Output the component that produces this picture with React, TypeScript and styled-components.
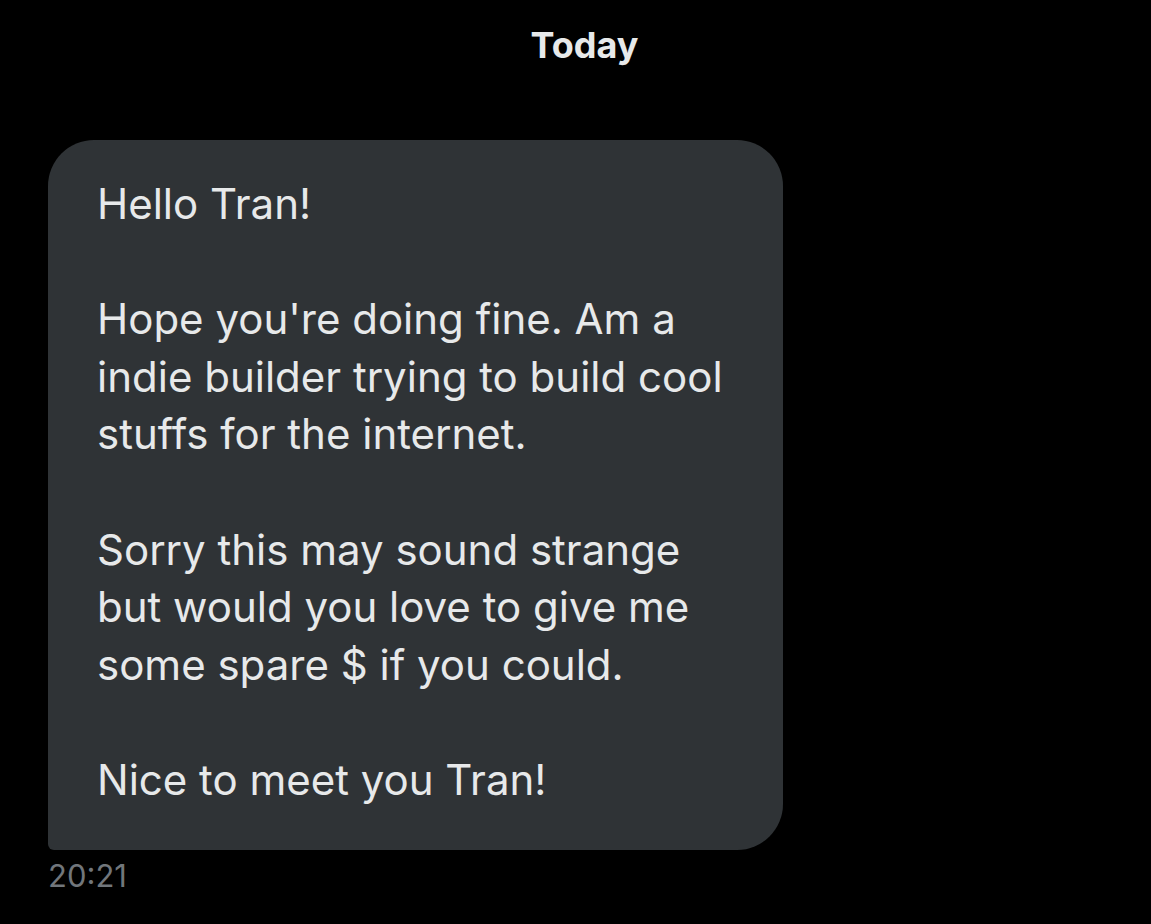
import React from "react";
import styled, { createGlobalStyle } from "styled-components";

const Global = createGlobalStyle`
  html, body {
    margin: 0;
    padding: 0;
    background: #000000;
  }
  body {
    font-family: Inter, "Liberation Sans", Arial, sans-serif;
    -webkit-font-smoothing: antialiased;
  }
`;

const Screen = styled.div`
  width: 1151px;
  height: 924px;
  background: #000000;
  display: flex;
  flex-direction: column;
  box-sizing: border-box;
  overflow: hidden;
`;

const DayHeader = styled.div`
  padding: 22px 0 0 18px;
  height: 140px;
  box-sizing: border-box;
  text-align: center;
  color: #e7e9ea;
  font-size: 36px;
  font-weight: 700;
  letter-spacing: 0;
  line-height: 46px;
`;

const MessageGroup = styled.div`
  display: flex;
  flex-direction: column;
  align-items: flex-start;
  padding-left: 48px;
`;

const Bubble = styled.div`
  width: 735px;
  height: 710px;
  box-sizing: border-box;
  background: #2f3336;
  border-radius: 46px 46px 46px 6px;
  padding: 35px 40px 0 49px;
  display: flex;
  flex-direction: column;
  gap: 57.6px;
  color: #e7e9ea;
`;

const Paragraph = styled.p`
  margin: 0;
  font-size: 42px;
  line-height: 57.6px;
  font-weight: 400;
  white-space: nowrap;
  letter-spacing: 0;
`;

const Timestamp = styled.div`
  margin-top: 6px;
  color: #71767b;
  font-size: 31px;
  line-height: 40px;
  letter-spacing: 0;
`;

export default function App() {
  return (
    <>
      <Global />
      <Screen>
        <DayHeader>Today</DayHeader>
        <MessageGroup>
          <Bubble>
            <Paragraph>Hello Tran!</Paragraph>
            <Paragraph>
              Hope you're doing fine. Am a<br />
              indie builder trying to build cool<br />
              stuffs for the internet.
            </Paragraph>
            <Paragraph>
              Sorry this may sound strange<br />
              but would you love to give me<br />
              some spare $ if you could.
            </Paragraph>
            <Paragraph>Nice to meet you Tran!</Paragraph>
          </Bubble>
          <Timestamp>20:21</Timestamp>
        </MessageGroup>
      </Screen>
    </>
  );
}
